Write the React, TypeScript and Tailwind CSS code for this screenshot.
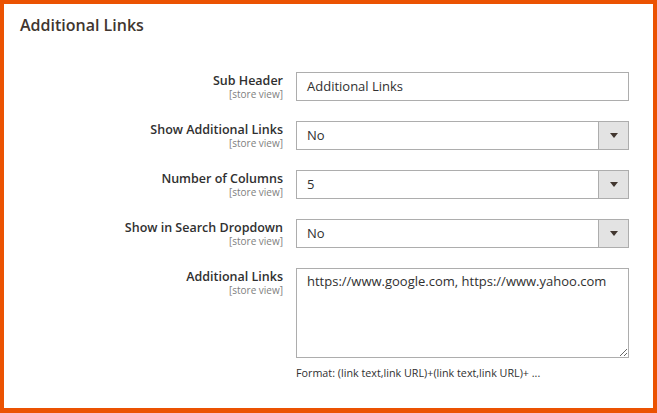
const font = { fontFamily: '"Open Sans", "Liberation Sans", sans-serif' };

type Row = {
  label: string;
  kind: "text" | "select" | "textarea";
  value: string;
};

const rows: Row[] = [
  { label: "Sub Header", kind: "text", value: "Additional Links" },
  { label: "Show Additional Links", kind: "select", value: "No" },
  { label: "Number of Columns", kind: "select", value: "5" },
  { label: "Show in Search Dropdown", kind: "select", value: "No" },
  {
    label: "Additional Links",
    kind: "textarea",
    value: "https://www.google.com, https://www.yahoo.com",
  },
];

function Field({ row }: { row: Row }) {
  if (row.kind === "text") {
    return (
      <div className="flex h-[29px] w-[333px] items-center border border-[#adadad] bg-white pl-[10px] text-[13px] text-[#303030]">
        {row.value}
      </div>
    );
  }
  if (row.kind === "select") {
    return (
      <div className="flex h-[29px] w-[333px] border border-[#adadad] bg-white text-[13px] text-[#303030]">
        <div className="flex flex-1 items-center pl-[10px]">{row.value}</div>
        <div className="flex w-[30px] items-center justify-center border-l border-[#adadad] bg-[#e3e3e3]">
          <div className="h-0 w-0 border-x-[4px] border-t-[5px] border-x-transparent border-t-[#41362f]" />
        </div>
      </div>
    );
  }
  return (
    <div className="flex flex-col">
      <textarea
        readOnly
        defaultValue={row.value}
        style={font}
        className="block h-[90px] w-[333px] resize-y border border-[#adadad] bg-white px-[10px] pt-[2px] text-[13px] leading-[20px] text-[#303030] outline-none"
      />
      <div className="mt-[8px] text-[10.75px] leading-[15px] text-[#303030]">
        Format: (link text,link URL)+(link text,link URL)+ ...
      </div>
    </div>
  );
}

export default function App() {
  return (
    <div
      style={font}
      className="h-[413px] w-[657px] border-4 border-b-[5px] border-[#eb5202] bg-white"
    >
      <h2 className="pl-[16px] pt-[10px] text-[16px] font-semibold leading-[22px] text-[#41362f]">
        Additional Links
      </h2>
      <div className="mt-[36px] flex flex-col gap-[20px]">
        {rows.map((row) => (
          <div key={row.label} className="flex items-start">
            <div className="w-[279px] pt-[1px] text-right">
              <div className="text-[12.5px] font-semibold leading-[15px] text-[#303030]">
                {row.label}
              </div>
              <div className="text-[10px] leading-[12px] text-[#808080]">
                [store view]
              </div>
            </div>
            <div className="ml-[13px]">
              <Field row={row} />
            </div>
          </div>
        ))}
      </div>
    </div>
  );
}
